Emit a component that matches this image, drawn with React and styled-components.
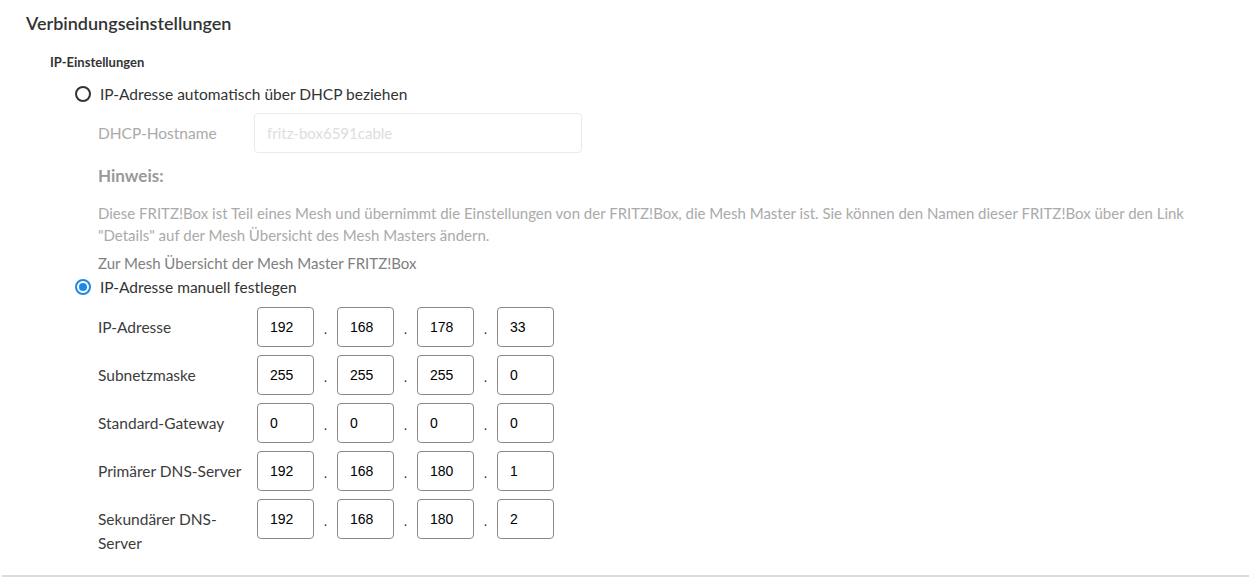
import styled, { createGlobalStyle } from 'styled-components';

const GlobalStyle = createGlobalStyle`
    body {
        margin: 0;
        background: #fff;
        font-family: Lato, 'Open Sans', sans-serif;
        color: #333;
    }
`;

//--------Styles--------//
const Page = styled.div`
    width: 1251px;
    height: 585px;
    box-sizing: border-box;
    padding: 12px 0 0 0;
    position: relative;
`;

const Heading = styled.h2`
    margin: 0 0 0 26px;
    font-size: 18px;
    font-weight: 600;
    line-height: 22px;
    color: #333;
`;

const SubHeading = styled.h3`
    margin: 20px 0 0 50px;
    font-size: 13px;
    font-weight: 700;
    line-height: 16px;
    color: #333;
`;

const RadioRow = styled.label`
    display: flex;
    align-items: center;
    gap: 9px;
    margin-left: 75px;
    margin-top: ${p => p.$top}px;
    height: 24px;
    font-size: 15.5px;
    color: #333;
`;

const RadioCircle = styled.span`
    box-sizing: border-box;
    width: 16px;
    height: 16px;
    border-radius: 50%;
    border: 2px solid ${p => (p.checked ? '#1e88e5' : '#333')};
    display: flex;
    align-items: center;
    justify-content: center;

    &::after {
        content: '';
        width: 8px;
        height: 8px;
        border-radius: 50%;
        background: ${p => (p.checked ? '#1e88e5' : 'transparent')};
    }
`;

const Indented = styled.div`
    margin-left: 98px;
    padding-right: 28px;
`;

const HostRow = styled.div`
    display: flex;
    align-items: center;
    margin-top: 7px;
`;

const Label = styled.div`
    width: 156px;
    font-size: 15.5px;
    line-height: 24px;
    color: ${p => (p.disabled ? '#aaa' : '#333')};
`;

const TextInput = styled.div`
    box-sizing: border-box;
    width: 328px;
    height: 40px;
    border: 1px solid #eaeaea;
    border-radius: 4px;
    padding: 0 12px;
    display: flex;
    align-items: center;
    font-size: 15px;
    color: #ddd;
`;

const NoteTitle = styled.div`
    margin-top: 12px;
    font-size: 17px;
    font-weight: 700;
    line-height: 22px;
    color: #999;
`;

const NoteText = styled.p`
    margin: 15px 0 0 0;
    max-width: 1135px;
    font-size: 15px;
    line-height: 22px;
    color: #aaa;
`;

const NoteLink = styled.div`
    margin-top: 6px;
    font-size: 15px;
    line-height: 22px;
    color: #808080;
`;

const IpGrid = styled.div`
    display: flex;
    flex-direction: column;
    gap: 8px;
    margin-top: 8px;
`;

const IpRow = styled.div`
    display: flex;
    align-items: flex-start;
`;

const IpLabel = styled.div`
    width: 150px;
    margin-right: 9px;
    padding-top: 8px;
    font-size: 15.5px;
    line-height: 24px;
    color: #3c3c3c;
`;

const Octets = styled.div`
    display: flex;
    align-items: center;
`;

const Octet = styled.div`
    box-sizing: border-box;
    width: 57px;
    height: 40px;
    border: 1px solid #888;
    border-radius: 4px;
    padding: 0 12px;
    display: flex;
    align-items: center;
    font-family: 'Liberation Sans', Arial, sans-serif;
    font-size: 14px;
    color: #000;
`;

const Dot = styled.span`
    width: 23px;
    text-align: center;
    padding-top: 4px;
    font-family: 'Liberation Sans', Arial, sans-serif;
    font-size: 14px;
    color: #222;
`;

const BottomLine = styled.div`
    position: absolute;
    left: 2px;
    right: 2px;
    top: 575px;
    height: 2px;
    background: #dcdcdc;
`;

const rows = [
    ['IP-Adresse', ['192', '168', '178', '33']],
    ['Subnetzmaske', ['255', '255', '255', '0']],
    ['Standard-Gateway', ['0', '0', '0', '0']],
    ['Primärer DNS-Server', ['192', '168', '180', '1']],
    ['Sekundärer DNS-Server', ['192', '168', '180', '2']],
];

function App() {
    return (
        <Page>
            <GlobalStyle />
            <Heading>Verbindungseinstellungen</Heading>
            <SubHeading>IP-Einstellungen</SubHeading>
            <RadioRow $top={12}>
                <RadioCircle />
                IP-Adresse automatisch über DHCP beziehen
            </RadioRow>
            <Indented>
                <HostRow>
                    <Label disabled>DHCP-Hostname</Label>
                    <TextInput>fritz-box6591cable</TextInput>
                </HostRow>
                <NoteTitle>Hinweis:</NoteTitle>
                <NoteText>
                    Diese FRITZ!Box ist Teil eines Mesh und übernimmt die Einstellungen von der FRITZ!Box, die Mesh Master ist. Sie können den Namen dieser FRITZ!Box über den Link "Details" auf der Mesh Übersicht des Mesh Masters ändern.
                </NoteText>
                <NoteLink>Zur Mesh Übersicht der Mesh Master FRITZ!Box</NoteLink>
            </Indented>
            <RadioRow $top={1}>
                <RadioCircle checked />
                IP-Adresse manuell festlegen
            </RadioRow>
            <Indented>
                <IpGrid>
                    {rows.map(([label, parts]) => (
                        <IpRow key={label}>
                            <IpLabel>{label}</IpLabel>
                            <Octets>
                                {parts.map((v, i) => (
                                    <Octets key={i}>
                                        {i > 0 && <Dot>.</Dot>}
                                        <Octet>{v}</Octet>
                                    </Octets>
                                ))}
                            </Octets>
                        </IpRow>
                    ))}
                </IpGrid>
            </Indented>
            <BottomLine />
        </Page>
    );
}

export default App;
